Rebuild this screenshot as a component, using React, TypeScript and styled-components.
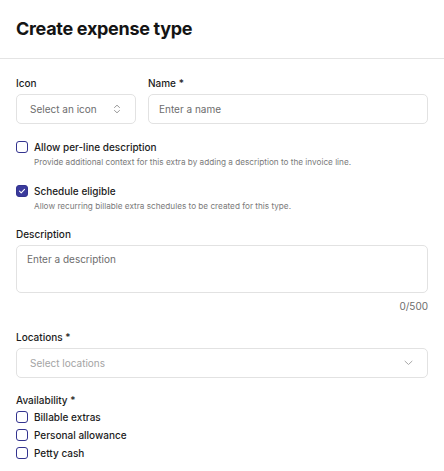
import styled, { createGlobalStyle } from "styled-components";

const Global = createGlobalStyle`
  body {
    margin: 0;
    background: #fff;
    font-family: Inter, "Noto Sans", sans-serif;
    color: #1c1c1c;
  }
`;

const Page = styled.div`
  width: 444px;
`;

const Header = styled.div`
  height: 59px;
  display: flex;
  align-items: center;
  padding: 0 16px 1px;
  border-bottom: 1px solid #e4e4e4;
  box-sizing: border-box;
`;

const Title = styled.h1`
  margin: 0;
  font-size: 18px;
  font-weight: 700;
  letter-spacing: -0.3px;
  color: #141414;
`;

const Body = styled.div`
  padding: 17px 16px 0;
  display: flex;
  flex-direction: column;
`;

const Row = styled.div`
  display: flex;
  gap: 12px;
`;

type FieldProps = { $width?: string; $mt?: number };

const Field = styled.div<FieldProps>`
  display: flex;
  flex-direction: column;
  width: ${p => p.$width ?? "auto"};
  flex: ${p => (p.$width ? "none" : "1")};
  margin-top: ${p => p.$mt ?? 0}px;
`;

const Label = styled.label`
  font-size: 10px;
  font-weight: 500;
  line-height: 14px;
  color: #1c1c1c;
  margin-bottom: 4px;
`;

const Box = styled.div<{ $h?: number }>`
  height: ${p => p.$h ?? 30}px;
  border: 1px solid #e2e2e2;
  border-radius: 5px;
  box-sizing: border-box;
  display: flex;
  align-items: center;
  justify-content: space-between;
  padding: 0 10px;
  font-size: 10px;
  color: #6d6d6d;
`;

const SelectBox = styled(Box)`
  padding: 0 14px 0 13px;
`;

const TextArea = styled(Box)`
  align-items: flex-start;
  padding: 7px 10px;
`;

const Muted = styled.span<{ $light?: boolean }>`
  color: ${p => (p.$light ? "#a4a4a4" : "#6d6d6d")};
`;

const Counter = styled.div`
  text-align: right;
  font-size: 10px;
  line-height: 14px;
  color: #6d6d6d;
  margin-top: 6px;
`;

const CheckRow = styled.div<{ $mt?: number }>`
  display: flex;
  gap: 6px;
  margin-top: ${p => p.$mt ?? 0}px;
`;

const Check = styled.span<{ $on?: boolean }>`
  width: 12px;
  height: 12px;
  flex: none;
  box-sizing: border-box;
  border: 1px solid #33338f;
  border-radius: 3px;
  background: ${p => (p.$on ? "#3a3a9c" : "#fff")};
  display: flex;
  align-items: center;
  justify-content: center;
  margin-top: 1px;
`;

const CheckText = styled.div`
  display: flex;
  flex-direction: column;
`;

const CheckLabel = styled.span`
  font-size: 10px;
  font-weight: 500;
  line-height: 14px;
  color: #1c1c1c;
`;

const CheckHint = styled.span`
  font-size: 8.2px;
  line-height: 12px;
  color: #7a7a7a;
  margin-top: 2px;
`;

const CheckList = styled.div`
  display: flex;
  flex-direction: column;
  gap: 4px;
  margin-top: -1px;
`;

const Checkbox = ({ on, label, hint, mt }: { on?: boolean; label: string; hint?: string; mt?: number }) => (
  <CheckRow $mt={mt}>
    <Check $on={on}>
      {on && (
        <svg width="8" height="8" viewBox="0 0 8 8" fill="none">
          <path d="M1.5 4.2 3.2 5.8 6.5 2.3" stroke="#fff" strokeWidth="1.1" strokeLinecap="round" strokeLinejoin="round" />
        </svg>
      )}
    </Check>
    <CheckText>
      <CheckLabel>{label}</CheckLabel>
      {hint && <CheckHint>{hint}</CheckHint>}
    </CheckText>
  </CheckRow>
);

export default function App() {
  return (
    <Page>
      <Global />
      <Header>
        <Title>Create expense type</Title>
      </Header>
      <Body>
        <Row>
          <Field $width="120px">
            <Label>Icon</Label>
            <SelectBox>
              <Muted>Select an icon</Muted>
              <svg width="8" height="10" viewBox="0 0 8 10" fill="none">
                <path d="M1.5 3.5 4 1.2 6.5 3.5M1.5 6.5 4 8.8 6.5 6.5" stroke="#9a9a9a" strokeWidth="1" strokeLinecap="round" strokeLinejoin="round" />
              </svg>
            </SelectBox>
          </Field>
          <Field>
            <Label>Name *</Label>
            <Box>
              <Muted>Enter a name</Muted>
            </Box>
          </Field>
        </Row>

        <Checkbox
          mt={16}
          label="Allow per-line description"
          hint="Provide additional context for this extra by adding a description to the invoice line."
        />
        <Checkbox
          mt={16}
          on
          label="Schedule eligible"
          hint="Allow recurring billable extra schedules to be created for this type."
        />

        <Field $mt={15}>
          <Label>Description</Label>
          <TextArea $h={48}>
            <Muted>Enter a description</Muted>
          </TextArea>
          <Counter>0/500</Counter>
        </Field>

        <Field $mt={17}>
          <Label>Locations *</Label>
          <SelectBox>
            <Muted $light>Select locations</Muted>
            <svg width="9" height="6" viewBox="0 0 9 6" fill="none">
              <path d="M1 1.2 4.5 4.5 8 1.2" stroke="#a8a8a8" strokeWidth="1" strokeLinecap="round" strokeLinejoin="round" />
            </svg>
          </SelectBox>
        </Field>

        <Field $mt={15}>
          <Label>Availability *</Label>
          <CheckList>
            <Checkbox label="Billable extras" />
            <Checkbox label="Personal allowance" />
            <Checkbox label="Petty cash" />
          </CheckList>
        </Field>
      </Body>
    </Page>
  );
}
